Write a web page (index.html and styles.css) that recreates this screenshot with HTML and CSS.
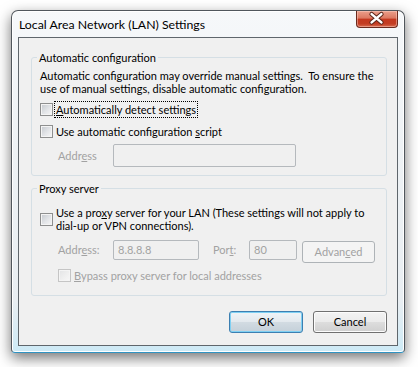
FILE: index.html
```html
<!DOCTYPE html>
<html>
<head>
<meta charset="utf-8">
<link rel="stylesheet" href="styles.css">
</head>
<body>
<div class="window">
  <div class="titlebar">
    <span class="title">Local Area Network (LAN) Settings</span>
    <div class="close">
      <svg width="42" height="17" viewBox="0 0 42 17">
        <path d="M16 4 L26 12.5 M26 4 L16 12.5" stroke="#5a2418" stroke-width="4.6" stroke-linecap="round" fill="none"/>
        <path d="M16 4 L26 12.5 M26 4 L16 12.5" stroke="#ffffff" stroke-width="2.6" stroke-linecap="round" fill="none"/>
      </svg>
    </div>
  </div>
  <div class="client">
    <fieldset class="group group-auto">
      <legend>Automatic configuration</legend>
      <p class="desc">Automatic configuration may override manual settings.&nbsp; To ensure the<br>use of manual settings, disable automatic configuration.</p>
      <div class="check-row row-first">
        <span class="cb"></span>
        <span class="label focus"><u>A</u>utomatically detect settings</span>
      </div>
      <div class="check-row row-second">
        <span class="cb"></span>
        <span class="label">Use automatic configuration <u>s</u>cript</span>
      </div>
      <div class="field-row">
        <span class="field-label addr-label disabled">Addr<u>e</u>ss</span>
        <span class="input input-script"></span>
      </div>
    </fieldset>

    <fieldset class="group group-proxy">
      <legend>Proxy server</legend>
      <div class="check-row multi">
        <span class="cb"></span>
        <span class="label">Use a pro<u>x</u>y server for your LAN (These settings will not apply to<br>dial-up or VPN connections).</span>
      </div>
      <div class="proxy-row">
        <span class="field-label addr-label disabled">Addr<u>e</u>ss:</span>
        <span class="input input-addr disabled">8.8.8.8</span>
        <span class="field-label port-label disabled">Por<u>t</u>:</span>
        <span class="input input-port disabled">80</span>
        <span class="btn-adv">Advan<u>c</u>ed</span>
      </div>
      <div class="check-row bypass">
        <span class="cb cb-disabled"></span>
        <span class="label disabled"><u>B</u>ypass proxy server for local addresses</span>
      </div>
    </fieldset>

    <div class="buttons">
      <span class="btn btn-default">OK</span>
      <span class="btn">Cancel</span>
    </div>
  </div>
</div>
</body>
</html>
```

FILE: styles.css
```css
* { box-sizing: border-box; }
html, body { margin: 0; background: #ffffff; }
body {
  width: 418px;
  height: 367px;
  overflow: hidden;
  font-family: Lato, "Open Sans", sans-serif;
  font-size: 11px;
  color: #000;
}

.window {
  margin: 10px 0 0 11px;
  width: 394px;
  height: 343px;
  border: 1px solid #50565c;
  border-bottom-color: #2f93c2;
  border-radius: 7px 7px 4px 4px;
  background: linear-gradient(180deg, #f6f8fa 0%, #eef2f5 40%, #e9eef2 85%, #cdeaf6 100%);
  box-shadow: 0 5px 14px rgba(0, 0, 0, 0.55), inset 0 0 0 1px #ffffff;
  padding: 0 6px 6px 6px;
  display: flex;
  flex-direction: column;
}

.titlebar {
  height: 26px;
  flex: none;
  display: flex;
  justify-content: space-between;
  align-items: flex-start;
}

.title {
  margin: 6px 0 0 1px;
  font-size: 12.3px;
  line-height: 15px;
  color: #000;
}

.close {
  width: 42px;
  height: 17px;
  border: 1px solid #6b2a1e;
  border-top: none;
  border-radius: 0 0 4px 4px;
  background: linear-gradient(180deg, #eb9f8b 0%, #dc7861 45%, #c4381f 50%, #c33d23 80%, #d96c50 100%);
  box-shadow: inset 0 0 0 1px rgba(255, 215, 205, 0.45);
  display: flex;
}
.close svg { display: block; margin: -1px 0 0 -1px; }

.client {
  flex: 1;
  border: 1px solid #5f666c;
  background: #f0f0f0;
  padding: 0 10px 0 12px;
  display: flex;
  flex-direction: column;
}

.group {
  margin: 12px 0 0 0;
  padding: 4px 8px 8px 8px;
  border: 1px solid #d5dfe5;
  border-radius: 3px;
  min-width: 0;
}
.group legend {
  padding: 0 2px;
  margin-left: -3px;
  line-height: 15px;
}

.group-proxy {
  margin-top: 5px;
  padding-top: 10px;
  padding-bottom: 11px;
}

.desc {
  margin: 0;
  line-height: 13px;
  white-space: nowrap;
}

.check-row {
  display: flex;
  align-items: center;
  height: 18px;
  white-space: nowrap;
}
.row-first { margin-top: 5px; }
.row-second { margin-top: 4px; }
.check-row.multi { height: auto; }
.check-row.bypass { margin-top: 3px; padding-left: 18px; }

.cb {
  flex: none;
  width: 13px;
  height: 13px;
  border: 1px solid #8e8f8f;
  background: linear-gradient(135deg, #c4c8cd 0%, #e3e5e8 55%, #f7f7f7 100%);
  box-shadow: inset 0 0 0 1px #f4f4f4;
}
.cb-disabled {
  border-color: #c5c5c5;
  background: linear-gradient(135deg, #e2e3e4 0%, #f0f0f0 60%, #f7f7f7 100%);
}

.label {
  margin-left: 2px;
  padding: 0 1px;
  line-height: 13px;
}
.focus { outline: 1px dotted #000; outline-offset: 0; line-height: 15px; }

.disabled { color: #a2a2a2; }

.field-row {
  display: flex;
  align-items: center;
  margin-top: 4px;
  padding-left: 18px;
}
.field-label { flex: none; }
.addr-label { width: 55px; }

.input {
  display: flex;
  align-items: center;
  border: 1px solid #b5b9bd;
  border-radius: 2px;
  background: #f0f0f0;
  padding-left: 4px;
}
.input-script { width: 183px; height: 23px; }

.proxy-row {
  display: flex;
  align-items: flex-start;
  margin-top: 8px;
  padding-left: 18px;
  line-height: 20px;
}
.input-addr { width: 86px; height: 20px; }
.port-label { width: 36px; margin-left: 14px; }
.input-port { width: 48px; height: 20px; }
.btn-adv {
  width: 73px;
  height: 22px;
  margin: 1px 0 0 5px;
  border: 1px solid #aeb3b7;
  border-radius: 3px;
  background: #f4f4f4;
  color: #a2a2a2;
  text-align: center;
  line-height: 20px;
}

.buttons {
  display: flex;
  justify-content: flex-end;
  gap: 10px;
  margin-top: 15px;
}
.btn {
  width: 74px;
  height: 22px;
  border: 1px solid #707070;
  border-radius: 3px;
  background: linear-gradient(180deg, #f3f3f3 0%, #ebebeb 48%, #dddddd 52%, #cfcfcf 100%);
  box-shadow: inset 0 0 0 1px #fcfcfc;
  text-align: center;
  line-height: 20px;
}
.btn-default {
  border-color: #3c7fb1;
  background: linear-gradient(180deg, #f0f4f7 0%, #e3e9ee 48%, #d2dbe2 52%, #c4d0d9 100%);
  box-shadow: inset 0 0 0 1px #7fd0f3;
}
```
